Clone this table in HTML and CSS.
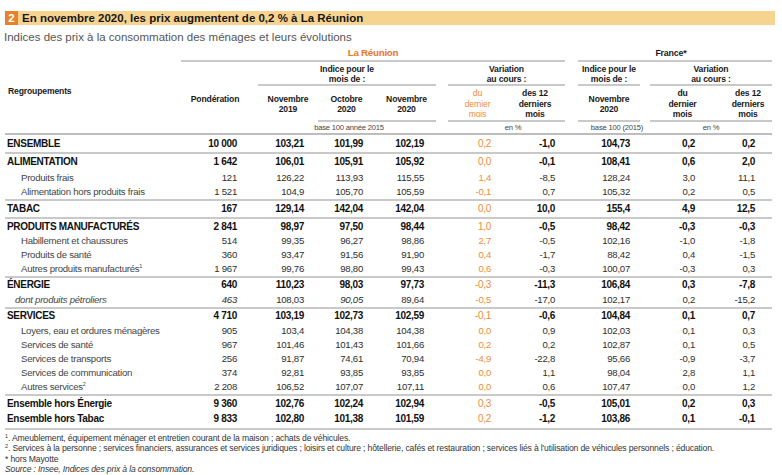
FILE: index.html
```html
<!DOCTYPE html>
<html lang="fr">
<head>
<meta charset="utf-8">
<title>Indices des prix</title>
<link rel="stylesheet" href="styles.css">
</head>
<body>
<div class="page">
  <h1 class="title"><span class="num">2</span>En novembre 2020, les prix augmentent de 0,2 % à La Réunion</h1>
  <p class="subtitle">Indices des prix à la consommation des ménages et leurs évolutions</p>
  <table class="ipc">
    <colgroup>
      <col class="c1"><col class="c2"><col class="c3"><col class="c4"><col class="c5">
      <col class="c6"><col class="c7"><col class="c8"><col class="c9"><col class="c10">
    </colgroup>
    <thead>
      <tr class="ha">
        <th rowspan="4" class="regr seg thick">Regroupements</th>
        <th colspan="6" class="zone reu seg l1 r13 pr12">La Réunion</th>
        <th colspan="3" class="zone fr seg pr8">France*</th>
      </tr>
      <tr class="hb">
        <th rowspan="3" class="pond seg thick">Pondération</th>
        <th colspan="3" class="seg r12 pr12">Indice pour le<br>mois de :</th>
        <th colspan="2" class="seg r13 pr13">Variation<br>au cours :</th>
        <th class="seg r10 pr10">Indice pour le<br>mois de :</th>
        <th colspan="2" class="seg">Variation<br>au cours :</th>
      </tr>
      <tr class="hc">
        <th>Novembre<br>2019</th>
        <th class="seg pr2">Octobre<br>2020</th>
        <th class="seg r12 pr12">Novembre<br>2020</th>
        <th class="seg orange pr5">du<br>dernier<br>mois</th>
        <th class="seg r13 pr20">des 12<br>derniers<br>mois</th>
        <th class="seg r10 pr10">Novembre<br>2020</th>
        <th class="seg">du<br>dernier<br>mois</th>
        <th class="seg pl9">des 12<br>derniers<br>mois</th>
      </tr>
      <tr class="hd">
        <th colspan="3" class="seg thick pr8">base 100 année 2015</th>
        <th colspan="2" class="seg thick">en %</th>
        <th class="seg thick pl6">base 100 (2015)</th>
        <th colspan="2" class="seg thick">en %</th>
      </tr>
    </thead>
    <tbody>
      <tr class="grp r-ens"><td>ENSEMBLE</td><td>10&nbsp;000</td><td>103,21</td><td>101,99</td><td>102,19</td><td>0,2</td><td>-1,0</td><td>104,73</td><td>0,2</td><td>0,2</td></tr>
      <tr class="grp sep"><td>ALIMENTATION</td><td>1&nbsp;642</td><td>106,01</td><td>105,91</td><td>105,92</td><td>0,0</td><td>-0,1</td><td>108,41</td><td>0,6</td><td>2,0</td></tr>
      <tr class="sub after1"><td>Produits frais</td><td>121</td><td>126,22</td><td>113,93</td><td>115,55</td><td>1,4</td><td>-8,5</td><td>128,24</td><td>3,0</td><td>11,1</td></tr>
      <tr class="sub"><td>Alimentation hors produits frais</td><td>1&nbsp;521</td><td>104,9</td><td>105,70</td><td>105,59</td><td>-0,1</td><td>0,7</td><td>105,32</td><td>0,2</td><td>0,5</td></tr>
      <tr class="grp sep"><td>TABAC</td><td>167</td><td>129,14</td><td>142,04</td><td>142,04</td><td>0,0</td><td>10,0</td><td>155,4</td><td>4,9</td><td>12,5</td></tr>
      <tr class="grp sep r-pm"><td>PRODUITS MANUFACTURÉS</td><td>2&nbsp;841</td><td>98,97</td><td>97,50</td><td>98,44</td><td>1,0</td><td>-0,5</td><td>98,42</td><td>-0,3</td><td>-0,3</td></tr>
      <tr class="sub"><td>Habillement et chaussures</td><td>514</td><td>99,35</td><td>96,27</td><td>98,86</td><td>2,7</td><td>-0,5</td><td>102,16</td><td>-1,0</td><td>-1,8</td></tr>
      <tr class="sub"><td>Produits de santé</td><td>360</td><td>93,47</td><td>91,56</td><td>91,90</td><td>0,4</td><td>-1,7</td><td>88,42</td><td>0,4</td><td>-1,5</td></tr>
      <tr class="sub"><td>Autres produits manufacturés<sup>1</sup></td><td>1&nbsp;967</td><td>99,76</td><td>98,80</td><td>99,43</td><td>0,6</td><td>-0,3</td><td>100,07</td><td>-0,3</td><td>0,3</td></tr>
      <tr class="grp sep r-nrg"><td>ÉNERGIE</td><td>640</td><td>110,23</td><td>98,03</td><td>97,73</td><td>-0,3</td><td>-11,3</td><td>106,84</td><td>0,3</td><td>-7,8</td></tr>
      <tr class="sub dont after2"><td><em>dont produits pétroliers</em></td><td><em>463</em></td><td>108,03</td><td><em>90,05</em></td><td>89,64</td><td>-0,5</td><td>-17,0</td><td>102,17</td><td>0,2</td><td>-15,2</td></tr>
      <tr class="grp sep r-serv"><td>SERVICES</td><td>4&nbsp;710</td><td>103,19</td><td>102,73</td><td>102,59</td><td>-0,1</td><td>-0,6</td><td>104,84</td><td>0,1</td><td>0,7</td></tr>
      <tr class="sub after1"><td>Loyers, eau et ordures ménagères</td><td>905</td><td>103,4</td><td>104,38</td><td>104,38</td><td>0,0</td><td>0,9</td><td>102,03</td><td>0,1</td><td>0,3</td></tr>
      <tr class="sub"><td>Services de santé</td><td>967</td><td>101,46</td><td>101,43</td><td>101,66</td><td>0,2</td><td>0,2</td><td>102,87</td><td>0,1</td><td>0,5</td></tr>
      <tr class="sub"><td>Services de transports</td><td>256</td><td>91,87</td><td>74,61</td><td>70,94</td><td>-4,9</td><td>-22,8</td><td>95,66</td><td>-0,9</td><td>-3,7</td></tr>
      <tr class="sub"><td>Services de communication</td><td>374</td><td>92,81</td><td>93,85</td><td>93,85</td><td>0,0</td><td>1,1</td><td>98,04</td><td>2,8</td><td>1,1</td></tr>
      <tr class="sub"><td>Autres services<sup>2</sup></td><td>2&nbsp;208</td><td>106,52</td><td>107,07</td><td>107,11</td><td>0,0</td><td>0,6</td><td>107,47</td><td>0,0</td><td>1,2</td></tr>
      <tr class="grp sep tot"><td>Ensemble hors Énergie</td><td>9&nbsp;360</td><td>102,76</td><td>102,24</td><td>102,94</td><td>0,3</td><td>-0,5</td><td>105,01</td><td>0,2</td><td>0,3</td></tr>
      <tr class="grp tot last"><td>Ensemble hors Tabac</td><td>9&nbsp;833</td><td>102,80</td><td>101,38</td><td>101,59</td><td>0,2</td><td>-1,2</td><td>103,86</td><td>0,1</td><td>-0,1</td></tr>
    </tbody>
  </table>
  <div class="notes">
    <p><sup>1</sup>. Ameublement, équipement ménager et entretien courant de la maison ; achats de véhicules.</p>
    <p><sup>2</sup>. Services à la personne ; services financiers, assurances et services juridiques ; loisirs et culture ; hôtellerie, cafés et restauration ; services liés à l'utilisation de véhicules personnels ; éducation.</p>
    <p>* hors Mayotte</p>
    <p class="src">Source : Insee, Indices des prix à la consommation.</p>
  </div>
</div>
</body>
</html>
```

FILE: styles.css
```css
* { box-sizing: border-box; }
html, body { margin: 0; background: #fff; }
body { font-family: "Liberation Sans", Arial, sans-serif; color: #222; }

.page { width: 782px; height: 475px; padding: 11px 7px 0 5px; overflow: hidden; }

.title {
  margin: 0;
  height: 14px;
  display: flex;
  align-items: center;
  background: #f6d38f;
  font-size: 11.5px;
  font-weight: bold;
  line-height: 14px;
  color: #161616;
}
.title .num {
  width: 13px;
  height: 14px;
  margin-right: 4px;
  background: #e8822a;
  color: #fff;
  text-align: center;
}

.subtitle {
  margin: 6px 0 0 -1px;
  font-size: 11.5px;
  line-height: 12px;
  color: #555;
}

.ipc {
  margin-top: 3px;
  width: 767px;
  table-layout: fixed;
  border-collapse: separate;
  border-spacing: 0;
  font-family: "Liberation Sans", Arial, sans-serif;
}
.c1 { width: 175px; }
.c2 { width: 78px; }
.c3 { width: 60px; }
.c4 { width: 59px; }
.c5 { width: 71px; }
.c6 { width: 64px; }
.c7 { width: 66px; }
.c8 { width: 72px; }
.c9 { width: 65px; }
.c10 { width: 57px; }

/* header */
.ipc th {
  padding: 0;
  font-size: 8.6px;
  letter-spacing: -0.15px;
  line-height: 10px;
  font-weight: bold;
  text-align: center;
  vertical-align: middle;
  color: #1a1a1a;
}
.seg {
  --lc: #c9c9c9;
  --lw: 2px;
  --li: 0px;
  --ri: 0px;
  background-image: linear-gradient(var(--lc), var(--lc));
  background-repeat: no-repeat;
  background-position: left var(--li) bottom 0;
  background-size: calc(100% - var(--li) - var(--ri)) var(--lw);
}
.l1 { --li: 1px; }
.r10 { --ri: 10px; }
.r12 { --ri: 12px; }
.r13 { --ri: 13px; }
.seg.thick { --lc: #bdbdbd; }

.pr2 { padding-right: 2px !important; }
.pr5 { padding-right: 5px !important; }
.pr8 { padding-right: 8px !important; }
.pr10 { padding-right: 10px !important; }
.pr12 { padding-right: 12px !important; }
.pr13 { padding-right: 13px !important; }
.pr20 { padding-right: 20px !important; }
.pl6 { padding-left: 6px !important; }
.pl9 { padding-left: 9px !important; }

.ha th { height: 16px; }
.hb th { height: 24px; }
.hc th { height: 36px; line-height: 10.5px; }
.hd th { height: 13px; font-size: 7.6px; letter-spacing: -0.2px; font-weight: normal; color: #444; line-height: 11px; vertical-align: top; }

.ipc th.zone { font-size: 9.8px; letter-spacing: -0.3px; line-height: 14px; vertical-align: top; }
.ipc th.reu { color: #e8782a; }
.ipc th.fr { font-size: 8.8px; letter-spacing: -0.15px; }
.ipc th.orange { color: #ef8c3a; font-weight: normal; }
.ipc th.regr { text-align: left; padding-left: 3px; }
.ipc th.pond { padding-right: 8px; }

/* body */
.ipc td {
  padding: 0;
  text-align: right;
  white-space: nowrap;
  color: #2a2a2a;
}
.ipc td:first-child { text-align: left; }
.grp td { font-size: 10px; letter-spacing: -0.3px; line-height: 16px; font-weight: bold; color: #111; }
.sub td { font-size: 9.6px; letter-spacing: -0.25px; line-height: 14px; color: #2e2e2e; }
.sep td { border-top: 2px solid #c9c9c9; }
.last td { border-bottom: 2px solid #c9c9c9; }

.r-ens td { line-height: 17px; }
.r-pm td { line-height: 15px; }
.r-nrg td { line-height: 13px; }
.r-serv td { line-height: 14px; }
.after1 td { padding-top: 1px; }
.after2 td { padding-top: 2px; }
.tot td { line-height: 15px; }
.tot.last td { padding-bottom: 2px; }

.grp td:first-child { padding-left: 2px; }
.sub td:first-child { padding-left: 16px; color: #444; }
.dont td:first-child { padding-left: 10px; }

.ipc td:nth-child(2) { padding-right: 21px; }
.ipc td:nth-child(3) { padding-right: 14px; }
.ipc td:nth-child(4) { padding-right: 14px; }
.ipc td:nth-child(5) { padding-right: 24px; }
.ipc td:nth-child(6) { padding-right: 21px; color: #ef8c3a; font-weight: normal; }
.ipc td:nth-child(7) { padding-right: 23px; }
.ipc td:nth-child(8) { padding-right: 20px; }
.ipc td:nth-child(9) { padding-right: 20px; }
.ipc td:nth-child(10) { padding-right: 17px; }

.ipc sup { font-size: 5.5px; line-height: 0; vertical-align: 4px; letter-spacing: 0; }

/* notes */
.notes { margin-top: 3px; font-size: 8.6px; letter-spacing: -0.15px; line-height: 10.4px; color: #333; }
.notes p { margin: 0; }
.notes sup { font-size: 5.5px; line-height: 0; vertical-align: 3px; }
.notes .src { font-style: italic; }
```
